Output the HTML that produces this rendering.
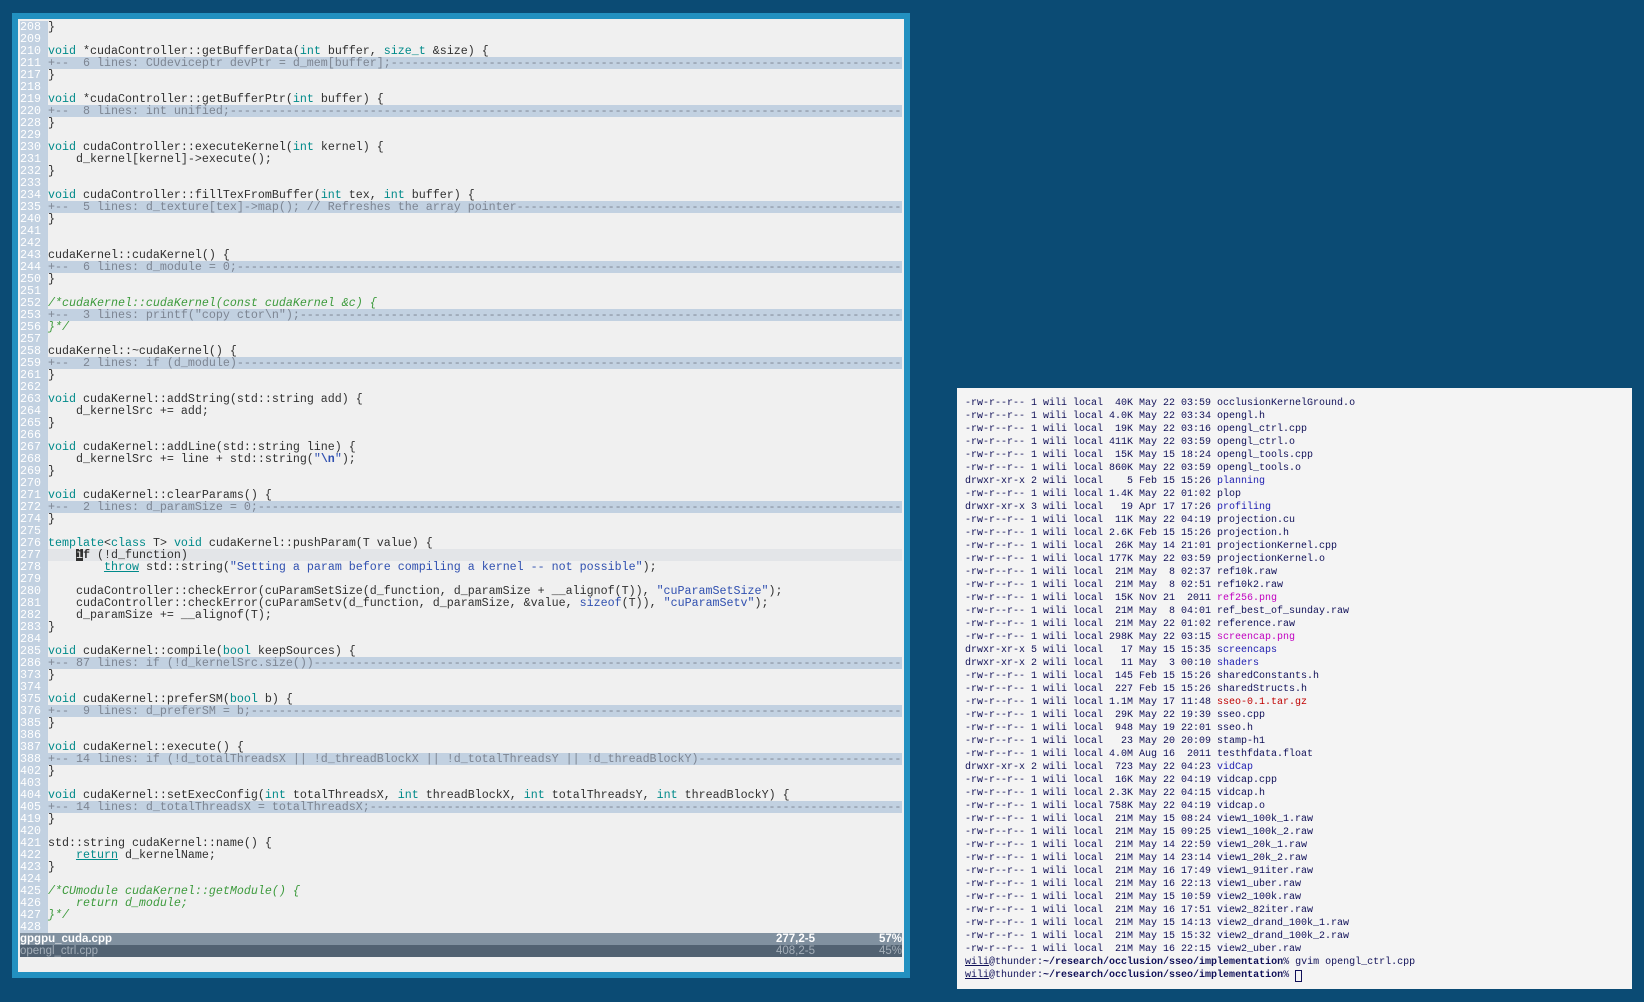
<!DOCTYPE html>
<html><head><meta charset="utf-8"><style>
html,body{margin:0;padding:0;}
body{width:1644px;height:1002px;background:#0b4b74;position:relative;overflow:hidden;}
#frame{position:absolute;left:12px;top:13px;width:898px;height:965px;background:#2290c0;}
#vim{position:absolute;left:18px;top:19px;width:886px;height:953px;background:#f0f0f0;}
#code{position:absolute;left:20px;top:21px;width:882px;font-family:"Liberation Mono",monospace;font-size:11.67px;}
.l{height:12px;line-height:12px;white-space:pre;overflow:hidden;color:#303030;position:relative;}
.n{display:inline-block;width:28px;background:#c2d1e1;color:#fff;}
.f{background:#c2d1e1;color:#7d8592;}
.cur{background:#e3e5e8;}
.k{color:#008a8a;}
.c{color:#3c9a3c;font-style:italic;}
.s{color:#3050b0;}
.u{text-decoration:underline;}
.bc{background:#303030;color:#f0f0f0;}
.st1{background:#8191a0;color:#fff;font-weight:bold;}
.st2{background:#526272;color:#a4aeb8;}
.st{height:12px;line-height:12px;white-space:pre;position:relative;font-family:"Liberation Sans",sans-serif;font-size:11.5px;}
.st span{position:absolute;top:0;}
#term{position:absolute;left:957px;top:388px;width:675px;height:601px;background:#f4f4f4;}
#tt{position:absolute;left:8px;top:9px;font-family:"Liberation Mono",monospace;font-size:10px;color:#101058;}
#tt div{height:13px;line-height:13px;white-space:pre;overflow:hidden;}
.d{color:#1c1cb0;}.p{color:#c000c0;}.r{color:#c00000;}
</style></head><body>
<div id="frame"></div><div id="vim"></div>
<div id="code">
<div class="l"><span class="n">208 </span>}</div>
<div class="l"><span class="n">209 </span></div>
<div class="l"><span class="n">210 </span><span class="k">void</span> *cudaController::getBufferData(<span class="k">int</span> buffer, <span class="k">size_t</span> &amp;size) {</div>
<div class="l f"><span class="n">211 </span>+--  6 lines: CUdeviceptr devPtr = d_mem[buffer];------------------------------------------------------------------------------------------------</div>
<div class="l"><span class="n">217 </span>}</div>
<div class="l"><span class="n">218 </span></div>
<div class="l"><span class="n">219 </span><span class="k">void</span> *cudaController::getBufferPtr(<span class="k">int</span> buffer) {</div>
<div class="l f"><span class="n">220 </span>+--  8 lines: int unified;------------------------------------------------------------------------------------------------------------------</div>
<div class="l"><span class="n">228 </span>}</div>
<div class="l"><span class="n">229 </span></div>
<div class="l"><span class="n">230 </span><span class="k">void</span> cudaController::executeKernel(<span class="k">int</span> kernel) {</div>
<div class="l"><span class="n">231 </span>    d_kernel[kernel]-&gt;execute();</div>
<div class="l"><span class="n">232 </span>}</div>
<div class="l"><span class="n">233 </span></div>
<div class="l"><span class="n">234 </span><span class="k">void</span> cudaController::fillTexFromBuffer(<span class="k">int</span> tex, <span class="k">int</span> buffer) {</div>
<div class="l f"><span class="n">235 </span>+--  5 lines: d_texture[tex]-&gt;map(); // Refreshes the array pointer---------------------------------------------------------------------------</div>
<div class="l"><span class="n">240 </span>}</div>
<div class="l"><span class="n">241 </span></div>
<div class="l"><span class="n">242 </span></div>
<div class="l"><span class="n">243 </span>cudaKernel::cudaKernel() {</div>
<div class="l f"><span class="n">244 </span>+--  6 lines: d_module = 0;----------------------------------------------------------------------------------------------------------------</div>
<div class="l"><span class="n">250 </span>}</div>
<div class="l"><span class="n">251 </span></div>
<div class="l"><span class="n">252 </span><span class="c">/*cudaKernel::cudaKernel(const cudaKernel &amp;c) {</span></div>
<div class="l f"><span class="n">253 </span>+--  3 lines: printf("copy ctor\n");-------------------------------------------------------------------------------------------------------</div>
<div class="l"><span class="n">256 </span><span class="c">}*/</span></div>
<div class="l"><span class="n">257 </span></div>
<div class="l"><span class="n">258 </span>cudaKernel::~cudaKernel() {</div>
<div class="l f"><span class="n">259 </span>+--  2 lines: if (d_module)---------------------------------------------------------------------------------------------------------------</div>
<div class="l"><span class="n">261 </span>}</div>
<div class="l"><span class="n">262 </span></div>
<div class="l"><span class="n">263 </span><span class="k">void</span> cudaKernel::addString(std::string add) {</div>
<div class="l"><span class="n">264 </span>    d_kernelSrc += add;</div>
<div class="l"><span class="n">265 </span>}</div>
<div class="l"><span class="n">266 </span></div>
<div class="l"><span class="n">267 </span><span class="k">void</span> cudaKernel::addLine(std::string line) {</div>
<div class="l"><span class="n">268 </span>    d_kernelSrc += line + std::string(<span class="s">"</span><b class="s">\n</b><span class="s">"</span>);</div>
<div class="l"><span class="n">269 </span>}</div>
<div class="l"><span class="n">270 </span></div>
<div class="l"><span class="n">271 </span><span class="k">void</span> cudaKernel::clearParams() {</div>
<div class="l f"><span class="n">272 </span>+--  2 lines: d_paramSize = 0;-------------------------------------------------------------------------------------------------------------</div>
<div class="l"><span class="n">274 </span>}</div>
<div class="l"><span class="n">275 </span></div>
<div class="l"><span class="n">276 </span><span class="k">template</span>&lt;<span class="k">class</span> T&gt; <span class="k">void</span> cudaKernel::pushParam(T value) {</div>
<div class="l cur"><span class="n">277 </span>    <span class="bc">i</span><b>f</b> (!d_function)</div>
<div class="l"><span class="n">278 </span>        <span class="k u">throw</span> std::string(<span class="s">"Setting a param before compiling a kernel -- not possible"</span>);</div>
<div class="l"><span class="n">279 </span></div>
<div class="l"><span class="n">280 </span>    cudaController::checkError(cuParamSetSize(d_function, d_paramSize + __alignof(T)), <span class="s">"cuParamSetSize"</span>);</div>
<div class="l"><span class="n">281 </span>    cudaController::checkError(cuParamSetv(d_function, d_paramSize, &amp;value, <span class="s">sizeof</span>(T)), <span class="s">"cuParamSetv"</span>);</div>
<div class="l"><span class="n">282 </span>    d_paramSize += __alignof(T);</div>
<div class="l"><span class="n">283 </span>}</div>
<div class="l"><span class="n">284 </span></div>
<div class="l"><span class="n">285 </span><span class="k">void</span> cudaKernel::compile(<span class="k">bool</span> keepSources) {</div>
<div class="l f"><span class="n">286 </span>+-- 87 lines: if (!d_kernelSrc.size())-----------------------------------------------------------------------------------------------------</div>
<div class="l"><span class="n">373 </span>}</div>
<div class="l"><span class="n">374 </span></div>
<div class="l"><span class="n">375 </span><span class="k">void</span> cudaKernel::preferSM(<span class="k">bool</span> b) {</div>
<div class="l f"><span class="n">376 </span>+--  9 lines: d_preferSM = b;--------------------------------------------------------------------------------------------------------------</div>
<div class="l"><span class="n">385 </span>}</div>
<div class="l"><span class="n">386 </span></div>
<div class="l"><span class="n">387 </span><span class="k">void</span> cudaKernel::execute() {</div>
<div class="l f"><span class="n">388 </span>+-- 14 lines: if (!d_totalThreadsX || !d_threadBlockX || !d_totalThreadsY || !d_threadBlockY)------------------------------------------------</div>
<div class="l"><span class="n">402 </span>}</div>
<div class="l"><span class="n">403 </span></div>
<div class="l"><span class="n">404 </span><span class="k">void</span> cudaKernel::setExecConfig(<span class="k">int</span> totalThreadsX, <span class="k">int</span> threadBlockX, <span class="k">int</span> totalThreadsY, <span class="k">int</span> threadBlockY) {</div>
<div class="l f"><span class="n">405 </span>+-- 14 lines: d_totalThreadsX = totalThreadsX;----------------------------------------------------------------------------------------------</div>
<div class="l"><span class="n">419 </span>}</div>
<div class="l"><span class="n">420 </span></div>
<div class="l"><span class="n">421 </span>std::string cudaKernel::name() {</div>
<div class="l"><span class="n">422 </span>    <span class="k u">return</span> d_kernelName;</div>
<div class="l"><span class="n">423 </span>}</div>
<div class="l"><span class="n">424 </span></div>
<div class="l"><span class="n">425 </span><span class="c">/*CUmodule cudaKernel::getModule() {</span></div>
<div class="l"><span class="n">426 </span><span class="c">    return d_module;</span></div>
<div class="l"><span class="n">427 </span><span class="c">}*/</span></div>
<div class="l"><span class="n">428 </span></div>
<div class="st st1"><span style="left:0">gpgpu_cuda.cpp</span><span style="left:756px">277,2-5</span><span style="right:0">57%</span></div>
<div class="st st2"><span style="left:0">opengl_ctrl.cpp</span><span style="left:756px">408,2-5</span><span style="right:0">45%</span></div>
</div>
<div id="term"><div id="tt">
<div>-rw-r--r-- 1 wili local  40K May 22 03:59 occlusionKernelGround.o</div>
<div>-rw-r--r-- 1 wili local 4.0K May 22 03:34 opengl.h</div>
<div>-rw-r--r-- 1 wili local  19K May 22 03:16 opengl_ctrl.cpp</div>
<div>-rw-r--r-- 1 wili local 411K May 22 03:59 opengl_ctrl.o</div>
<div>-rw-r--r-- 1 wili local  15K May 15 18:24 opengl_tools.cpp</div>
<div>-rw-r--r-- 1 wili local 860K May 22 03:59 opengl_tools.o</div>
<div>drwxr-xr-x 2 wili local    5 Feb 15 15:26 <span class="d">planning</span></div>
<div>-rw-r--r-- 1 wili local 1.4K May 22 01:02 plop</div>
<div>drwxr-xr-x 3 wili local   19 Apr 17 17:26 <span class="d">profiling</span></div>
<div>-rw-r--r-- 1 wili local  11K May 22 04:19 projection.cu</div>
<div>-rw-r--r-- 1 wili local 2.6K Feb 15 15:26 projection.h</div>
<div>-rw-r--r-- 1 wili local  26K May 14 21:01 projectionKernel.cpp</div>
<div>-rw-r--r-- 1 wili local 177K May 22 03:59 projectionKernel.o</div>
<div>-rw-r--r-- 1 wili local  21M May  8 02:37 ref10k.raw</div>
<div>-rw-r--r-- 1 wili local  21M May  8 02:51 ref10k2.raw</div>
<div>-rw-r--r-- 1 wili local  15K Nov 21  2011 <span class="p">ref256.png</span></div>
<div>-rw-r--r-- 1 wili local  21M May  8 04:01 ref_best_of_sunday.raw</div>
<div>-rw-r--r-- 1 wili local  21M May 22 01:02 reference.raw</div>
<div>-rw-r--r-- 1 wili local 298K May 22 03:15 <span class="p">screencap.png</span></div>
<div>drwxr-xr-x 5 wili local   17 May 15 15:35 <span class="d">screencaps</span></div>
<div>drwxr-xr-x 2 wili local   11 May  3 00:10 <span class="d">shaders</span></div>
<div>-rw-r--r-- 1 wili local  145 Feb 15 15:26 sharedConstants.h</div>
<div>-rw-r--r-- 1 wili local  227 Feb 15 15:26 sharedStructs.h</div>
<div>-rw-r--r-- 1 wili local 1.1M May 17 11:48 <span class="r">sseo-0.1.tar.gz</span></div>
<div>-rw-r--r-- 1 wili local  29K May 22 19:39 sseo.cpp</div>
<div>-rw-r--r-- 1 wili local  948 May 19 22:01 sseo.h</div>
<div>-rw-r--r-- 1 wili local   23 May 20 20:09 stamp-h1</div>
<div>-rw-r--r-- 1 wili local 4.0M Aug 16  2011 testhfdata.float</div>
<div>drwxr-xr-x 2 wili local  723 May 22 04:23 <span class="d">vidCap</span></div>
<div>-rw-r--r-- 1 wili local  16K May 22 04:19 vidcap.cpp</div>
<div>-rw-r--r-- 1 wili local 2.3K May 22 04:15 vidcap.h</div>
<div>-rw-r--r-- 1 wili local 758K May 22 04:19 vidcap.o</div>
<div>-rw-r--r-- 1 wili local  21M May 15 08:24 view1_100k_1.raw</div>
<div>-rw-r--r-- 1 wili local  21M May 15 09:25 view1_100k_2.raw</div>
<div>-rw-r--r-- 1 wili local  21M May 14 22:59 view1_20k_1.raw</div>
<div>-rw-r--r-- 1 wili local  21M May 14 23:14 view1_20k_2.raw</div>
<div>-rw-r--r-- 1 wili local  21M May 16 17:49 view1_91iter.raw</div>
<div>-rw-r--r-- 1 wili local  21M May 16 22:13 view1_uber.raw</div>
<div>-rw-r--r-- 1 wili local  21M May 15 10:59 view2_100k.raw</div>
<div>-rw-r--r-- 1 wili local  21M May 16 17:51 view2_82iter.raw</div>
<div>-rw-r--r-- 1 wili local  21M May 15 14:13 view2_drand_100k_1.raw</div>
<div>-rw-r--r-- 1 wili local  21M May 15 15:32 view2_drand_100k_2.raw</div>
<div>-rw-r--r-- 1 wili local  21M May 16 22:15 view2_uber.raw</div>
<div><span class="u">wili</span>@thunder:<b>~/research/occlusion/sseo/implementation</b>% gvim opengl_ctrl.cpp</div>
<div style="position:relative"><span class="u">wili</span>@thunder:<b>~/research/occlusion/sseo/implementation</b>% <span style="position:absolute;top:1px;width:5px;height:10px;border:1px solid #101058;"></span></div>
</div></div>
</body></html>
